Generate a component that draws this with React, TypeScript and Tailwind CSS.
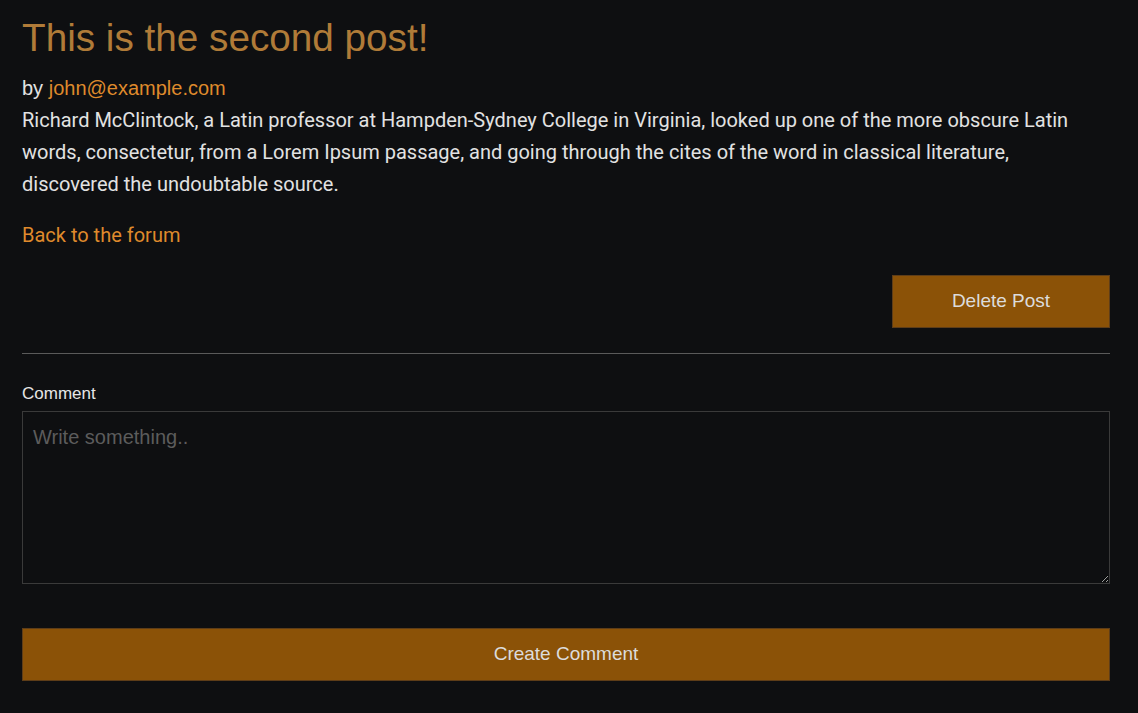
import React, { useState } from 'react';

const App: React.FC = () => {
  const [comment, setComment] = useState<string>('');

  return (
    <div className="min-h-[713px] bg-[#0e0f11] pl-[22px] pr-[28px] pt-[15px] pb-[32px] text-[#e2e2e2]">
      <h1 className="text-[38.7px] leading-[46px] text-[#b07b38] font-['Liberation_Sans',Arial,sans-serif]">
        This is the second post!
      </h1>

      <p className="mt-[16px] text-[20px] leading-[23px] font-['Liberation_Sans',Arial,sans-serif]">
        by <a href="#" className="text-[#df8a2c]">john@example.com</a>
      </p>

      <p className="mt-[4px] text-[20px] leading-[32px] font-['Roboto',sans-serif]">
        Richard McClintock, a Latin professor at Hampden-Sydney College in Virginia, looked up one of the
        more obscure Latin words, consectetur, from a Lorem Ipsum passage, and going through the cites of
        the word in classical literature, discovered the undoubtable source.
      </p>

      <a href="#" className="mt-[24px] block w-fit text-[20px] leading-[23px] text-[#df8a2c] font-['Roboto',sans-serif]">
        Back to the forum
      </a>

      <div className="mt-[28px] flex justify-end">
        <button className="h-[53px] w-[218px] border border-[#5e3d18] bg-[#8b5207] text-[19px] text-[#dcdcdc] font-['Liberation_Sans',Arial,sans-serif]">
          Delete Post
        </button>
      </div>

      <hr className="mt-[25px] border-t border-[#5a5a5a]" />

      <label className="mt-[30px] block text-[17px] leading-[20px] text-[#e6e6e6] font-['Liberation_Sans',Arial,sans-serif]">
        Comment
      </label>
      <textarea
        value={comment}
        onChange={(e) => setComment(e.target.value)}
        placeholder="Write something.."
        className="mt-[7px] block h-[173px] w-full border border-[#3a3a3a] bg-transparent px-[10px] pt-[10px] text-[20px] text-[#e2e2e2] placeholder:text-[#5c5c5c] outline-none font-['Liberation_Sans',Arial,sans-serif]"
      />

      <button className="mt-[44px] h-[53px] w-full border border-[#5e3d18] bg-[#8b5207] text-[19px] text-[#dcdcdc] font-['Liberation_Sans',Arial,sans-serif]">
        Create Comment
      </button>
    </div>
  );
};

export default App;
